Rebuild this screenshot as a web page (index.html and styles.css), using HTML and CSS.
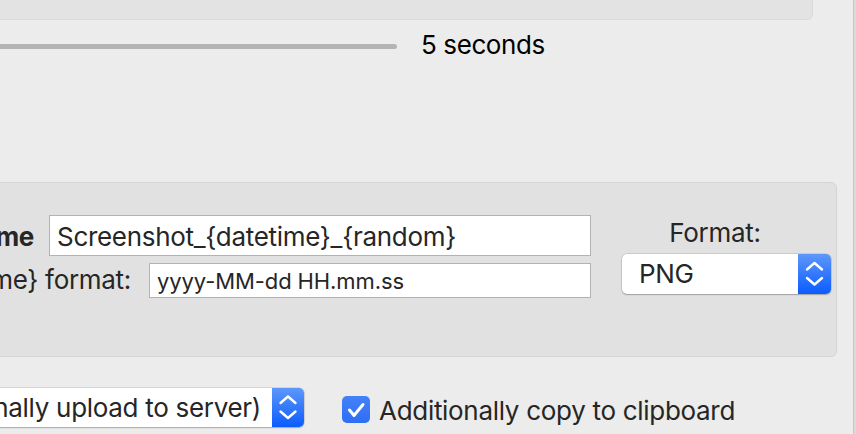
FILE: index.html
```html
<!DOCTYPE html>
<html>
<head>
<meta charset="utf-8">
<link rel="stylesheet" href="styles.css">
</head>
<body>
<div class="window">
  <div class="top-box"></div>
  <div class="slider-row">
    <div class="track"></div>
    <span class="slider-value">5 seconds</span>
  </div>
  <div class="group">
    <div class="fields">
      <div class="row row-name">
        <span class="lbl bold">File name</span>
        <div class="field field-big">Screenshot_{datetime}_{random}</div>
      </div>
      <div class="row row-fmt">
        <span class="lbl">{datetime} format:</span>
        <div class="field field-small">yyyy-MM-dd HH.mm.ss</div>
      </div>
    </div>
    <div class="format-col">
      <div class="format-label">Format:</div>
      <div class="popup popup-format">
        <span class="popup-text">PNG</span>
        <span class="stepper">
          <svg width="33" height="40" viewBox="0 0 33 40"><polyline points="9,15.5 16.5,9 24,15.5" fill="none" stroke="#fff" stroke-width="2.4" stroke-linecap="round" stroke-linejoin="round"/><polyline points="9,24 16.5,30.5 24,24" fill="none" stroke="#fff" stroke-width="2.4" stroke-linecap="round" stroke-linejoin="round"/></svg>
        </span>
      </div>
    </div>
  </div>
  <div class="bottom-row">
    <div class="popup popup-action">
      <span class="popup-text-wrap"><span class="popup-text">Save to file (and optionally upload to server)</span></span>
      <span class="stepper stepper-sm">
        <svg width="32" height="39" viewBox="0 0 32 39"><polyline points="8.5,15 16,8.5 23.5,15" fill="none" stroke="#fff" stroke-width="2.4" stroke-linecap="round" stroke-linejoin="round"/><polyline points="8.5,23.5 16,30 23.5,23.5" fill="none" stroke="#fff" stroke-width="2.4" stroke-linecap="round" stroke-linejoin="round"/></svg>
      </span>
    </div>
    <label class="check">
      <span class="box"><svg width="28" height="27" viewBox="0 0 28 27"><polyline points="7.5,14 12,19.5 21,8.5" fill="none" stroke="#fff" stroke-width="3" stroke-linecap="round" stroke-linejoin="round"/></svg></span>
      <span class="check-text">Additionally copy to clipboard</span>
    </label>
  </div>
</div>
</body>
</html>
```

FILE: styles.css
```css
* { box-sizing: border-box; }
html, body { margin: 0; padding: 0; }
body {
  width: 856px;
  height: 434px;
  overflow: hidden;
  background: #dadada;
  font-family: Inter, "Liberation Sans", sans-serif;
  color: #262626;
  letter-spacing: -0.3px;
}
.window {
  width: 854px;
  height: 434px;
  overflow: hidden;
  background: #ececec;
  border-right: 1px solid #c6c6c6;
}
.top-box {
  margin-left: -20px;
  width: 833px;
  height: 20px;
  background: #e3e3e3;
  border: 1px solid #dadada;
  border-top: none;
  border-radius: 0 0 6px 6px;
}
.slider-row {
  display: flex;
  align-items: center;
  margin-top: 10px;
  height: 30px;
}
.track {
  margin-left: -20px;
  width: 417px;
  height: 5px;
  margin-top: 3px;
  background: #b4b4b4;
  border-radius: 3px;
}
.slider-value {
  margin-left: 24px;
  font-size: 26px;
  line-height: 30px;
  color: #000;
  white-space: nowrap;
  letter-spacing: -0.4px;
}
.group {
  margin-top: 122px;
  margin-left: -20px;
  width: 857px;
  height: 175px;
  border: 1px solid #d5d5d5;
  border-radius: 6px;
  background: #e1e1e1;
  display: flex;
  padding-top: 32px;
}
.fields {
  width: 610px;
  display: flex;
  flex-direction: column;
  gap: 7px;
}
.row {
  display: flex;
  justify-content: flex-end;
  align-items: baseline;
}
.lbl {
  flex: none;
  font-size: 26px;
  line-height: 30px;
  white-space: nowrap;
}
.bold { font-weight: 700; }
.row-name .lbl { margin-right: 15px; }
.row-fmt .lbl { margin-right: 18px; }
.field {
  flex: none;
  background: #fff;
  border: 1px solid #b3b3b3;
  padding-left: 7px;
  white-space: nowrap;
  overflow: hidden;
}
.field-big {
  width: 542px;
  height: 41px;
  font-size: 26px;
  line-height: 37px;
  padding-top: 2px;
}
.field-small {
  width: 442px;
  height: 35px;
  font-size: 22px;
  line-height: 32px;
  padding-top: 1px;
  letter-spacing: -0.1px;
}
.format-col {
  margin-left: 31px;
  width: 209px;
  display: flex;
  flex-direction: column;
}
.format-label {
  margin-top: 3px;
  font-size: 26px;
  line-height: 30px;
  text-align: center;
  padding-right: 23px;
}
.popup {
  display: flex;
  background: #fff;
  border-radius: 5px;
  box-shadow: 0 0 0 0.5px rgba(0,0,0,0.18), 0 1px 1.5px rgba(0,0,0,0.22);
  font-size: 26px;
  white-space: nowrap;
}
.popup-format {
  margin-top: 6px;
  height: 40px;
  line-height: 40px;
}
.popup-format .popup-text {
  flex: 1;
  padding-left: 17px;
}
.stepper {
  flex: none;
  width: 33px;
  display: flex;
  background: linear-gradient(#5e97fb, #0b5cfe);
  border-radius: 0 5px 5px 0;
}
.stepper-sm { width: 32px; }
.bottom-row {
  margin-top: 31px;
  display: flex;
  align-items: flex-start;
}
.popup-action {
  margin-left: -20px;
  width: 324px;
  height: 39px;
  line-height: 39px;
}
.popup-text-wrap {
  flex: 1;
  display: flex;
  justify-content: flex-end;
  padding-right: 11px;
  min-width: 0;
}
.popup-text-wrap .popup-text { flex: none; }
.check {
  margin-left: 38px;
  margin-top: 8px;
  display: flex;
  align-items: flex-start;
}
.box {
  width: 28px;
  height: 27px;
  border-radius: 5px;
  background: linear-gradient(#4482f8, #2f6df5);
  display: flex;
}
.check-text {
  margin-left: 9px;
  margin-top: -0.5px;
  font-size: 26px;
  line-height: 30px;
  white-space: nowrap;
}
```
